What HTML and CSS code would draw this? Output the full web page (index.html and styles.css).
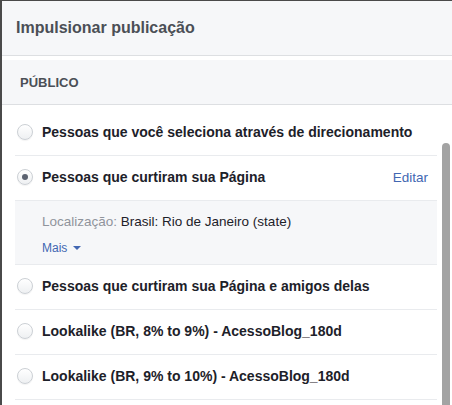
FILE: index.html
```html
<!DOCTYPE html>
<html lang="pt-BR">
<head>
<meta charset="UTF-8">
<meta name="viewport" content="width=device-width, initial-scale=1.0">
<title>Impulsionar publicação</title>
<link rel="stylesheet" href="styles.css">
</head>
<body>
<div class="dialog">
  <div class="dialog-header">
    <h1>Impulsionar publicação</h1>
  </div>

  <div class="section-head">
    <h2>PÚBLICO</h2>
  </div>

  <div class="body">
    <div class="audience-list">
      <div class="row">
        <span class="radio"></span>
        <span class="label">Pessoas que você seleciona através de direcionamento</span>
      </div>
      <div class="row">
        <span class="radio checked"></span>
        <span class="label">Pessoas que curtiram sua Página</span>
        <a class="edit" href="#">Editar</a>
      </div>
      <div class="details">
        <p><span class="muted">Localização:</span> Brasil: Rio de Janeiro (state)</p>
        <a class="more" href="#">Mais <span class="caret"></span></a>
      </div>
      <div class="row">
        <span class="radio"></span>
        <span class="label">Pessoas que curtiram sua Página e amigos delas</span>
      </div>
      <div class="row">
        <span class="radio"></span>
        <span class="label">Lookalike (BR, 8% to 9%) - AcessoBlog_180d</span>
      </div>
      <div class="row">
        <span class="radio"></span>
        <span class="label">Lookalike (BR, 9% to 10%) - AcessoBlog_180d</span>
      </div>
    </div>
    <div class="scroll-track">
      <div class="scroll-thumb"></div>
    </div>
  </div>
</div>
</body>
</html>
```

FILE: styles.css
```css
html, body {
  height: 100%;
}
body {
  margin: 0;
  padding: 1px 0 0 2px;
  box-sizing: border-box;
  background-color: #4a4a4a;
  font-family: "Liberation Sans", Arial, sans-serif;
  color: #1d2129;
  overflow: hidden;
}
.dialog {
  background-color: #fff;
  height: 100%;
  display: flex;
  flex-direction: column;
}
.dialog-header {
  background-color: #f6f7f9;
  border-bottom: 1px solid #dddfe2;
  height: 54px;
  display: flex;
  align-items: center;
  padding-left: 14px;
}
.dialog-header h1 {
  margin: 0;
  font-size: 16px;
  font-weight: bold;
  color: #4b4f56;
}
.section-head {
  margin-top: 4px;
  background-color: #f6f7f9;
  border-bottom: 1px solid #dddfe2;
  height: 44px;
  display: flex;
  align-items: center;
  padding-left: 18px;
}
.section-head h2 {
  margin: 0;
  font-size: 13px;
  font-weight: bold;
  color: #4b4f56;
}
.body {
  flex: 1;
  display: flex;
}
.audience-list {
  flex: 1;
  padding: 6px 5px 0 13px;
}
.row {
  height: 42px;
  border-bottom: 1px solid #e9ebee;
  display: flex;
  align-items: center;
  padding: 0 9px 2px 2px;
}
.radio {
  width: 14px;
  height: 14px;
  border: 1px solid #ccd0d5;
  border-radius: 50%;
  background: linear-gradient(#fff, #eef0f2);
  box-shadow: 0 1px 1px rgba(0, 0, 0, 0.05);
  display: flex;
  align-items: center;
  justify-content: center;
  flex-shrink: 0;
  margin-right: 9px;
}
.radio.checked::after {
  content: "";
  width: 6px;
  height: 6px;
  border-radius: 50%;
  background-color: #5b6270;
}
.label {
  flex: 1;
  font-size: 14px;
  font-weight: bold;
}
.edit {
  font-size: 13.5px;
  color: #4267b2;
  text-decoration: none;
}
.details {
  background-color: #f6f7f9;
  border-bottom: 1px solid #e9ebee;
  height: 64px;
  padding: 12px 0 0 27px;
  box-sizing: border-box;
}
.details p {
  margin: 0 0 7px;
  font-size: 13.5px;
  line-height: 18px;
}
.muted {
  color: #90949c;
}
.more {
  font-size: 12px;
  color: #4267b2;
  text-decoration: none;
  display: inline-flex;
  align-items: center;
  gap: 6px;
}
.caret {
  width: 0;
  height: 0;
  border-left: 4px solid transparent;
  border-right: 4px solid transparent;
  border-top: 4px solid #4267b2;
}
.scroll-track {
  width: 10px;
  display: flex;
  flex-direction: column;
}
.scroll-thumb {
  margin-top: 38px;
  width: 8px;
  flex: 1;
  background-color: #a3a3a3;
  border-radius: 4px 4px 0 0;
}
```
